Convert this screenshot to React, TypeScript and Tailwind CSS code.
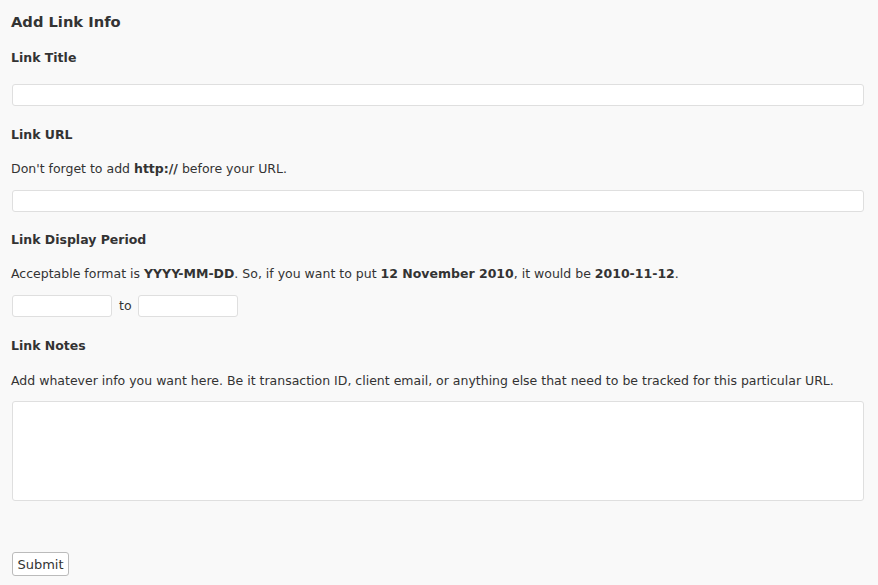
import React from "react";

const label = "block text-[12.5px] leading-[16px] font-bold";
const help = "text-[12.5px] leading-[16px]";
const field = "block ml-px h-[22px] w-[852px] rounded-[3px] border border-[#dfdfdf] bg-white";

export default function App() {
  return (
    <div
      className="min-h-[585px] bg-[#f9f9f9] px-[11px] pt-[12px] text-[#333]"
      style={{ fontFamily: '"DejaVu Sans", Verdana, sans-serif' }}
    >
      <h2 className="text-[14.7px] leading-[20px] font-bold">Add Link Info</h2>

      <label className={`${label} mt-[18px]`}>Link Title</label>
      <input type="text" className={`${field} mt-[18px]`} />

      <label className={`${label} mt-[21px]`}>Link URL</label>
      <p className={`${help} mt-[18px]`}>
        Don't forget to add <b>http://</b> before your URL.
      </p>
      <input type="text" className={`${field} mt-[13px]`} />

      <label className={`${label} mt-[20px]`}>Link Display Period</label>
      <p className={`${help} mt-[18px]`}>
        Acceptable format is <b>YYYY-MM-DD</b>. So, if you want to put <b>12 November 2010</b>, it would be{" "}
        <b>2010-11-12</b>.
      </p>
      <div className="mt-[13px] flex items-center ml-px">
        <input type="text" className="h-[22px] w-[100px] rounded-[3px] border border-[#dfdfdf] bg-white" />
        <span className="ml-[7px] mr-[6px] text-[12.5px] leading-[16px]">to</span>
        <input type="text" className="h-[22px] w-[100px] rounded-[3px] border border-[#dfdfdf] bg-white" />
      </div>

      <label className={`${label} mt-[21px]`}>Link Notes</label>
      <p className={`${help} mt-[19px]`}>
        Add whatever info you want here. Be it transaction ID, client email, or anything else that need to be tracked for this particular URL.
      </p>
      <textarea className="mt-[12px] block ml-px h-[100px] w-[852px] resize-none rounded-[3px] border border-[#dfdfdf] bg-white" />

      <button className="mt-[51px] ml-px block h-[24px] w-[57px] rounded-[3px] border border-[#bbb] bg-white pt-px text-[13px] text-[#333]">
        Submit
      </button>
    </div>
  );
}
